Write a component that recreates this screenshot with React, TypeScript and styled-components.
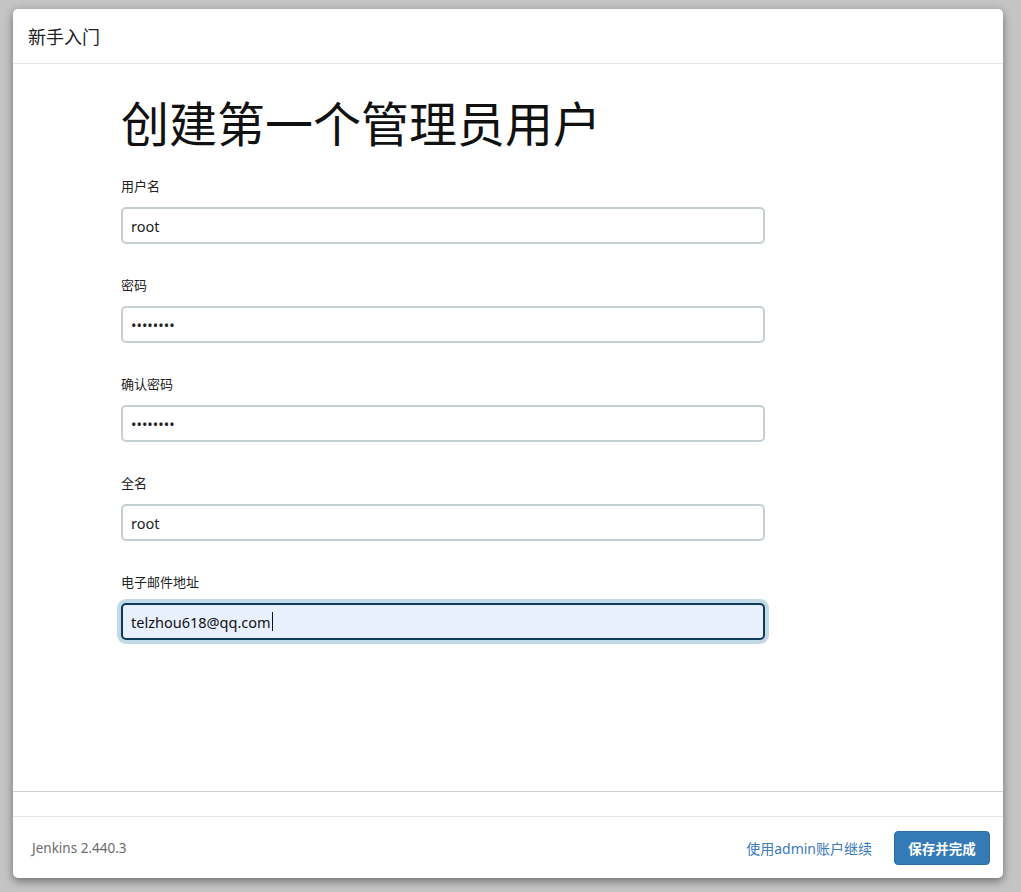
import styled, { createGlobalStyle } from 'styled-components'

const GlobalStyle = createGlobalStyle`
    html, body {
        margin: 0;
        padding: 0;
        background: #c4c4c4;
        font-family: "Noto Sans", "Noto Sans CJK SC", sans-serif;
        color: #333;
    }
`

const fields = [
    { label: '用户名', value: 'root', type: 'text' },
    { label: '密码', value: '12345678', type: 'password' },
    { label: '确认密码', value: '12345678', type: 'password' },
    { label: '全名', value: 'root', type: 'text' },
]

const App = () => {
    return (
        <>
            <GlobalStyle />
            <Page>
                <Modal>
                    <Header>新手入门</Header>
                    <Content>
                        <Title>创建第一个管理员用户</Title>
                        {fields.map((f) => (
                            <FormGroup key={f.label}>
                                <Label>{f.label}</Label>
                                <TextBox type={f.type} defaultValue={f.value} readOnly />
                            </FormGroup>
                        ))}
                        <FormGroup>
                            <Label>电子邮件地址</Label>
                            <ActiveBox>
                                telzhou618@qq.com<Caret />
                            </ActiveBox>
                        </FormGroup>
                    </Content>
                    <Strip />
                    <Footer>
                        <Version>Jenkins 2.440.3</Version>
                        <Actions>
                            <LinkButton href='#'>使用admin账户继续</LinkButton>
                            <PrimaryButton>保存并完成</PrimaryButton>
                        </Actions>
                    </Footer>
                </Modal>
            </Page>
        </>
    )
}

export default App

const Page = styled.div`
    width: 1021px;
    height: 892px;
    padding: 9px 0 0 13px;
    box-sizing: border-box;
`

const Modal = styled.div`
    width: 990px;
    height: 869px;
    background: #fff;
    border-radius: 5px;
    box-shadow: 0 3px 9px rgba(0, 0, 0, 0.45);
    display: flex;
    flex-direction: column;
    overflow: hidden;
`

const Header = styled.div`
    height: 54px;
    flex-shrink: 0;
    border-bottom: 1px solid #e5e5e5;
    padding-left: 15px;
    display: flex;
    align-items: center;
    font-size: 18px;
    color: #222;
`

const Content = styled.div`
    flex: 1;
    border-bottom: 1px solid #cfcfcf;
    padding: 33px 0 0 108px;
`

const Title = styled.h1`
    margin: 0 0 27px 0;
    font-size: 48px;
    line-height: 53px;
    font-weight: 400;
    color: #111;
`

const FormGroup = styled.div`
    margin-bottom: 32px;
`

const Label = styled.label`
    display: block;
    font-size: 13px;
    line-height: 18px;
    margin-bottom: 12px;
    color: #222;
`

const TextBox = styled.input`
    display: block;
    width: 644px;
    height: 37px;
    box-sizing: border-box;
    border: 2px solid #c6cfd3;
    border-radius: 5px;
    padding: 0 8px;
    font-family: "Noto Sans", "Noto Sans CJK SC", sans-serif;
    font-size: 14.5px;
    color: #222;
    outline: none;
    background: #fff;
`

const ActiveBox = styled.div`
    width: 644px;
    height: 37px;
    box-sizing: border-box;
    border: 2px solid #0e3b5a;
    border-radius: 5px;
    padding: 0 8px;
    background: #e8f0fe;
    box-shadow: 0 0 0 4px #c2d9e6;
    display: flex;
    align-items: center;
    font-size: 14.5px;
    color: #111;
`

const Caret = styled.span`
    display: inline-block;
    width: 1px;
    height: 19px;
    margin-left: 1px;
    background: #111;
`

const Strip = styled.div`
    height: 24px;
    flex-shrink: 0;
    border-bottom: 1px solid #e5e5e5;
`

const Footer = styled.div`
    height: 61px;
    flex-shrink: 0;
    display: flex;
    align-items: center;
    justify-content: space-between;
    padding: 0 13px 0 19px;
`

const Version = styled.span`
    font-size: 13.5px;
    color: #6b6b6b;
`

const Actions = styled.div`
    display: flex;
    align-items: center;
    gap: 22px;
`

const LinkButton = styled.a`
    font-size: 14px;
    color: #3a7ab8;
    text-decoration: none;
`

const PrimaryButton = styled.button`
    width: 96px;
    height: 34px;
    border: 1px solid #2e6da4;
    border-radius: 4px;
    background: #337ab7;
    color: #fff;
    font-family: "Noto Sans", "Noto Sans CJK SC", sans-serif;
    font-size: 13.5px;
    font-weight: 700;
    padding: 0;
`
